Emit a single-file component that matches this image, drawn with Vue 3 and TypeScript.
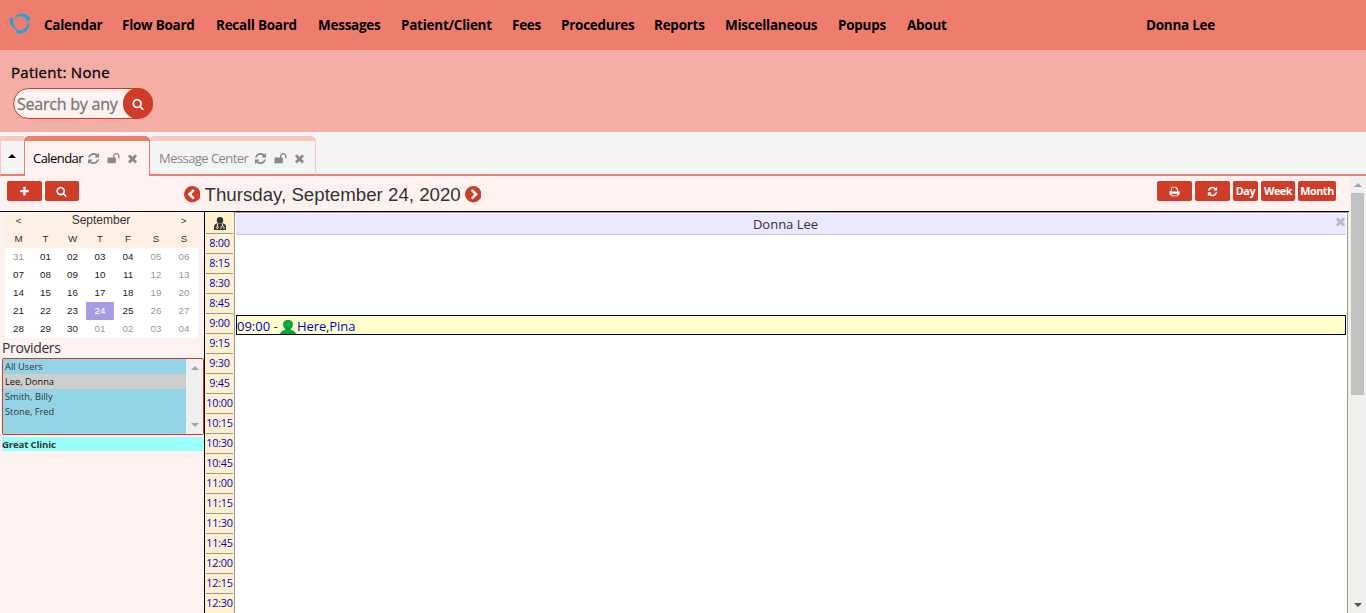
<script setup lang="ts">
interface Fitted { label: string; w: number }

const icons = {
  search: 'M1216 832q0-185-131.5-316.5t-316.5-131.5-316.5 131.5-131.5 316.5 131.5 316.5 316.5 131.5 316.5-131.5 131.5-316.5zm512 832q0 52-38 90t-90 38q-54 0-90-38l-343-342q-179 124-399 124-143 0-273.5-55.5t-225-150-150-225-55.5-273.5 55.5-273.5 150-225 225-150 273.5-55.5 273.5 55.5 225 150 150 225 55.5 273.5q0 220-124 399l343 343q37 37 37 90z',
  refresh: 'M1639 1056q0 5-1 7-64 268-268 434.5t-478 166.5q-146 0-282.5-55t-243.5-157l-129 129q-19 19-45 19t-45-19-19-45v-448q0-26 19-45t45-19h448q26 0 45 19t19 45-19 45l-137 137q71 66 161 102t187 36q134 0 250-65t186-179q11-17 53-117 8-23 30-23h192q13 0 22.5 9.5t9.5 22.5zm25-800v448q0 26-19 45t-45 19h-448q-26 0-45-19t-19-45 19-45l138-138q-148-137-349-137-134 0-250 65t-186 179q-11 17-53 117-8 23-30 23h-199q-13 0-22.5-9.5t-9.5-22.5v-7q65-268 270-434.5t480-166.5q146 0 284 55.5t245 156.5l130-129q19-19 45-19t45 19 19 45z',
  times: 'M1490 1322q0 40-28 68l-136 136q-28 28-68 28t-68-28l-294-294-294 294q-28 28-68 28t-68-28l-136-136q-28-28-28-68t28-68l294-294-294-294q-28-28-28-68t28-68l136-136q28-28 68-28t68 28l294 294 294-294q28-28 68-28t68 28l136 136q28 28 28 68t-28 68l-294 294 294 294q28 28 28 68z',
  plus: 'M1600 736v192q0 40-28 68t-68 28h-416v416q0 40-28 68t-68 28h-192q-40 0-68-28t-28-68v-416h-416q-40 0-68-28t-28-68v-192q0-40 28-68t68-28h416v-416q0-40 28-68t68-28h192q40 0 68 28t28 68v416h416q40 0 68 28t28 68z',
  print: 'M448 1536h896v-256h-896v256zm0-640h896v-384h-160q-40 0-68-28t-28-68v-160h-640v640zm1152 64q0-26-19-45t-45-19-45 19-19 45 19 45 45 19 45-19 19-45zm128 0v416q0 13-9.5 22.5t-22.5 9.5h-224v160q0 40-28 68t-68 28h-960q-40 0-68-28t-28-68v-160h-224q-13 0-22.5-9.5t-9.5-22.5v-416q0-79 56.5-135.5t135.5-56.5h64v-544q0-40 28-68t68-28h672q40 0 88 20t76 48l152 152q28 28 48 76t20 88v256h64q79 0 135.5 56.5t56.5 135.5z',
  unlock: 'M1728 576v256q0 26-19 45t-45 19h-64q-26 0-45-19t-19-45v-256q0-106-75-181t-181-75-181 75-75 181v192h96q40 0 68 28t28 68v576q0 40-28 68t-68 28h-960q-40 0-68-28t-28-68v-576q0-40 28-68t68-28h672v-192q0-185 131.5-316.5t316.5-131.5 316.5 131.5 131.5 316.5z',
}

const nav: Fitted[] = [
  { label: 'Calendar', w: 58 }, { label: 'Flow Board', w: 74 }, { label: 'Recall Board', w: 82 },
  { label: 'Messages', w: 63 }, { label: 'Patient/Client', w: 91 }, { label: 'Fees', w: 29 },
  { label: 'Procedures', w: 73 }, { label: 'Reports', w: 51 }, { label: 'Miscellaneous', w: 93 },
  { label: 'Popups', w: 49 }, { label: 'About', w: 41 },
]
const tabs = [
  { label: 'Calendar', active: true },
  { label: 'Message Center', active: false },
]
const weekdays = ['M', 'T', 'W', 'T', 'F', 'S', 'S']
const days = [31, ...Array.from({ length: 30 }, (_, i) => i + 1), 1, 2, 3, 4].map((n, i) => ({
  label: String(n).padStart(2, '0'),
  muted: i === 0 || i > 30 || i % 7 > 4,
  selected: i === 24,
}))
const providers = ['All Users', 'Lee, Donna', 'Smith, Billy', 'Stone, Fred']
const times = Array.from({ length: 19 }, (_, i) => `${8 + Math.floor(i / 4)}:${String((i % 4) * 15).padStart(2, '0')}`)
</script>

<template>
  <div class="page">
    <header class="top">
      <svg class="logo" viewBox="0 0 21 21" fill="#2e9bd6" stroke="#2e9bd6" stroke-width=".4">
        <circle cx="11" cy="10.600" r="7.300" fill="none" stroke="#8d96b0" stroke-width="1.300" />
        <path d="M6.500 3.500C10 0 16 .2 18.500 2.800L20.800 4.500 20.600 7.500 18.200 7.200C16.500 3.500 12 1.800 6.500 3.500z" />
        <path d="M1 5.200 4 5C3 9 4.200 13.500 8.200 16.300C3.500 15.600 .2 10.500 1 5.200z" />
        <path d="M19.800 10C20.800 15 16.500 20 11 20.200L7.800 20 7.200 17.800 9.500 17.200C14.500 17.800 18.200 15 19.800 10z" />
      </svg>
      <nav>
        <a v-for="n in nav" :key="n.label" :style="{ width: n.w + 'px' }">{{ n.label }}</a>
      </nav>
      <span class="user">Donna Lee</span>
    </header>

    <section class="patient">
      <div class="patient-name">Patient: None</div>
      <div class="search">
        <span class="search-text">Search by any</span>
        <span class="search-go"><svg class="ic" viewBox="0 0 1792 1792"><path :d="icons.search" /></svg></span>
      </div>
    </section>

    <div class="tabs">
      <div class="tab-up"><svg viewBox="0 0 8 4"><path d="M0 4 4 0 8 4z" /></svg></div>
      <div v-for="t in tabs" :key="t.label" class="tab" :class="{ active: t.active }">
        <span class="tab-label">{{ t.label }}</span>
        <svg class="ic" viewBox="0 0 1792 1792"><path :d="icons.refresh" /></svg>
        <svg class="ic lock" viewBox="0 0 1792 1792"><path :d="icons.unlock" /></svg>
        <svg class="ic" viewBox="0 0 1792 1792"><path :d="icons.times" /></svg>
      </div>
      <div class="tab-rest"></div>
    </div>

    <div class="body">
      <main>
        <div class="toolbar">
          <span class="btn wide"><svg class="ic" viewBox="0 0 1792 1792"><path :d="icons.plus" /></svg></span>
          <span class="btn wide"><svg class="ic" viewBox="0 0 1792 1792"><path :d="icons.search" /></svg></span>
          <div class="date">
            <svg class="chev" viewBox="0 0 16 16"><circle cx="8" cy="8" r="8" /><path d="M9.500 3.800 5.300 8l4.200 4.200" /></svg>
            <span>Thursday, September 24, 2020</span>
            <svg class="chev" viewBox="0 0 16 16"><circle cx="8" cy="8" r="8" /><path d="M6.500 3.800 10.700 8l-4.200 4.200" /></svg>
          </div>
          <span class="btn wider"><svg class="ic" viewBox="0 0 1792 1792"><path :d="icons.print" /></svg></span>
          <span class="btn wider"><svg class="ic" viewBox="0 0 1792 1792"><path :d="icons.refresh" /></svg></span>
          <span class="btn day">Day</span>
          <span class="btn week">Week</span>
          <span class="btn month">Month</span>
        </div>
        <div class="work">
          <aside>
            <div class="cal">
              <div class="cal-head"><span>&lt;</span><b>September</b><span>&gt;</span></div>
              <div class="cal-row dow"><span v-for="(d, i) in weekdays" :key="i">{{ d }}</span></div>
              <div class="cal-row dates">
                <span v-for="(d, i) in days" :key="i" :class="{ muted: d.muted, selected: d.selected }">{{ d.label }}</span>
              </div>
            </div>
            <div class="prov-title">Providers</div>
            <div class="prov">
              <div class="prov-list">
                <div v-for="p in providers" :key="p" :class="{ picked: p === 'Lee, Donna' }">{{ p }}</div>
              </div>
              <div class="prov-bar">
                <svg viewBox="0 0 8 4"><path d="M0 4 4 0 8 4z" /></svg>
                <svg viewBox="0 0 8 4"><path d="M0 0 4 4 8 0z" /></svg>
              </div>
            </div>
            <div class="clinic">Great Clinic</div>
          </aside>
          <div class="times">
            <div class="times-head">
              <svg viewBox="0 0 12 13">
                <circle cx="6" cy="3.200" r="3.200" fill="#333" />
                <path d="M0 13V9.500Q0 7 3 6.500h6q3 .5 3 3V13z" fill="#333" />
                <path d="M3.500 7v2.500M8.500 7v2M7 12v-1.500q0-1.500 1.500-1.500t1.500 1.500V12" stroke="#fff0cf" fill="none" />
                <circle cx="3.300" cy="10.500" r="1" stroke="#fff0cf" fill="none" />
              </svg>
            </div>
            <div v-for="t in times" :key="t" class="time">{{ t }}</div>
          </div>
          <div class="grid">
            <div class="grid-head">
              <span>Donna Lee</span>
              <svg class="ic" viewBox="0 0 1792 1792"><path :d="icons.times" /></svg>
            </div>
            <div class="appt">
              <span class="appt-time">09:00 <i>-</i></span>
              <svg viewBox="0 0 16 14" preserveAspectRatio="none"><path d="M8 0c3 0 5 2 4.900 4.700-.1 1.900-.9 3.300-2.200 4.300v1c2.600.5 4.500 1.600 5.300 4H0c.8-2.400 2.700-3.500 5.300-4V9C4 8 3.200 6.600 3.100 4.700 3 2 5 0 8 0z" fill="#00a33b" /></svg>
              <span class="appt-name">Here,Pina</span>
            </div>
          </div>
        </div>
      </main>
      <div class="scroll">
        <svg viewBox="0 0 8 4"><path d="M0 4 4 0 8 4z" fill="#a3a3a3" /></svg>
        <div class="thumb"></div>
        <svg class="down" viewBox="0 0 8 4"><path d="M0 0 4 4 8 0z" fill="#505050" /></svg>
      </div>
    </div>
  </div>
</template>

<style>
html, body { margin: 0; overflow: hidden; }
</style>

<style scoped>
.page { width: 1366px; height: 613px; overflow: hidden; display: flex; flex-direction: column; background: #f4f4f4; font-family: "Open Sans", "Noto Sans", sans-serif; color: #000; }
.page * { box-sizing: border-box; }
svg { display: block; flex: none; }
.ic { fill: currentColor; width: 14px; height: 14px; }
.top { height: 50px; flex: none; background: #ef7d6e; display: flex; align-items: center; font-size: 13.5px; font-weight: 700; letter-spacing: -.26px; line-height: 20px; white-space: nowrap; }
.logo { width: 21px; height: 21px; margin: 0 14px 3px 9px; }
nav { display: flex; gap: 20px; width: 1102px; }
nav a { flex: none; }
.patient { height: 82px; flex: none; background: #f4aea6; padding: 12px 11px 0; }
.patient-name { font-size: 15px; line-height: 21px; letter-spacing: .28px; -webkit-text-stroke: .3px #000; }
.search { margin: 5px 0 0 2px; width: 140px; height: 31px; border: 1px solid #cf3c28; border-radius: 16px; background: #fdf2f0; display: flex; color: #777; font-size: 16px; line-height: 30px; -webkit-text-stroke: .3px #777; }
.search-text { width: 110px; padding-left: 3px; white-space: nowrap; letter-spacing: -.23px; }
.search-go { width: 30px; height: 31px; margin: -1px; border-radius: 16px; background: #cf3c28; color: #fff; display: flex; align-items: center; justify-content: center; flex: none; }
.search-go .ic { width: 12px; height: 12px; }
.tabs { height: 44px; flex: none; display: flex; padding-top: 4px; }
.tab-up { width: 24px; border: 1px solid #f8c7c1; border-top: 5px solid #f8c7c1; border-right: 0; border-bottom: 2px solid #ef7d6e; padding: 13px 0 0 7px; }
.tab-up svg { width: 8px; height: 4px; }
.tab { border: 1px solid #f8c7c1; border-top: 5px solid #f8c7c1; border-left: 0; border-bottom: 2px solid #ef7d6e; border-radius: 5px 5px 0 0; width: 166px; display: flex; align-items: center; padding: 1px 0 0 9px; font-size: 13px; color: #888; }
.tab.active { width: 126px; background: #fdf2f0; border: 1px solid #ef7d6e; border-top-width: 5px; border-bottom: 0; padding: 0 0 1px 8px; }
.tab-label { width: 95px; white-space: nowrap; letter-spacing: -.55px; }
.active .tab-label { width: 54px; color: #000; }
.tab .ic { width: 13px; height: 13px; margin-right: 7px; }
.tab .lock { margin-right: 6px; }
.tab-rest { flex: 1; border-bottom: 2px solid #ef7d6e; }
.body { flex: 1; display: flex; min-height: 0; }
main { width: 1349px; background: #fdf2f0; display: flex; flex-direction: column; }
.toolbar { height: 35px; flex: none; padding: 5px 13px 0 7px; display: flex; gap: 3px; }
.btn { height: 20px; background: #cf3c28; border-radius: 2px; color: #fff; font-size: 10.8px; font-weight: 700; line-height: 20px; text-align: center; display: flex; align-items: center; justify-content: center; flex: none; letter-spacing: -.42px; }
.wide { width: 34.500px; }
.wider { width: 35px; }
.btn .ic { width: 11px; height: 11px; }
.day { width: 25px; } .week { width: 34px; } .month { width: 38px; }
.date { flex: 1; padding: 0 0 0 101.500px; display: flex; align-items: center; height: 27px; gap: 5px; font: 18.7px "Liberation Sans", Arial, sans-serif; color: #333; white-space: nowrap; }
.date span { width: 255px; flex: none; padding-top: 1px; margin-left: -.5px; }
.chev { width: 16.500px; height: 16.500px; fill: #cf3c28; }
.chev path { fill: none; stroke: #fff; stroke-width: 2.500; }
.work { flex: 1; min-height: 0; border-top: 1px solid #000; display: flex; overflow: hidden; }
aside { width: 204px; flex: none; }
.cal { margin-left: 5px; width: 193px; background: #fff; font: 9.800px "Liberation Sans", Arial, sans-serif; color: #333; text-align: center; }
.cal-head { height: 17px; background: #fff0e6; display: grid; grid-template-columns: 27px 1fr 29px; line-height: 17px; }
.cal-head b { font-weight: 400; font-size: 12px; padding-left: 1px; }
.cal-row { display: grid; grid-template-columns: 27px 27px 27px 28px 28px 28px 28px; }
.dow { background: #fff0e6; line-height: 19px; height: 19px; }
.dates { grid-auto-rows: 18px; line-height: 18px; color: #222; }
.dates .muted { color: #999; }
.dates .selected { background: #a89be6; color: #fff; }
.prov-title { padding-left: 2px; height: 20px; font-size: 14px; line-height: 20px; color: #333; letter-spacing: -.38px; }
.prov { margin-left: 2px; width: 202px; height: 77px; border: 1px solid #cf3c28; border-radius: 2px; display: flex; font-size: 9.300px; line-height: 15px; color: #333; }
.prov-list { flex: 1; background: #94d4e7; }
.prov-list div { padding-left: 2px; }
.prov-list .picked { background: #cecece; color: #111; }
.prov-bar { width: 17px; background: #f0f0f0; display: flex; flex-direction: column; justify-content: space-between; align-items: center; padding: 7px 0; }
.prov-bar svg { width: 8px; height: 4px; fill: #a3a3a3; }
.clinic { margin: 2px 0 0 2px; height: 14px; line-height: 15px; background: #9ff; font-size: 9.600px; font-weight: 700; color: #333; letter-spacing: -.15px; }
.times { width: 31px; flex: none; background: #fff0cf; border-left: 1px solid #000; border-right: 1px solid #999; padding: 0 1px; }
.times-head { height: 22px; border-bottom: 1px solid #999; padding: 5px 0 0 8px; }
.times-head svg { width: 12px; height: 13px; }
.time { height: 20px; border-bottom: 1px solid #999; color: #0000cd; font-size: 10.800px; line-height: 18px; text-align: center; white-space: nowrap; letter-spacing: -.2px; }
.grid { flex: 1; background: #fff; border-top: 1px solid #999; border-right: 1px solid #999; margin-right: 1px; box-shadow: 1px 0 #fff0cf; }
.grid-head { margin: 1px 1px 0 1px; height: 21px; background: #ece8ff; border-bottom: 1px solid #ccc; display: flex; font-size: 13px; line-height: 21px; color: #333; }
.grid-head span { flex: 1; text-align: center; padding-left: 1px; }
.grid-head .ic { width: 13px; height: 13px; color: #bbb8cc; margin: 1px -1px 0 0; }
.appt { margin: 80px 1px 0 1px; height: 20px; border: 1px solid #000; background: #ffffcc; display: flex; font-size: 13px; line-height: 20px; color: #0000cd; white-space: nowrap; }
.appt svg { width: 16px; height: 14px; margin-top: 4px; }
.appt-time { width: 43px; }
.appt-time i { font-style: normal; color: #333; }
.appt-name { padding-left: 1px; letter-spacing: -.1px; }
.scroll { width: 17px; background: #f0f0f0; display: flex; flex-direction: column; align-items: center; padding: 7px 0 6px; }
.scroll svg { width: 8px; height: 4px; }
.thumb { width: 13px; height: 202px; margin-top: 6px; background: #c1c1c1; }
.down { margin-top: auto; }
</style>
